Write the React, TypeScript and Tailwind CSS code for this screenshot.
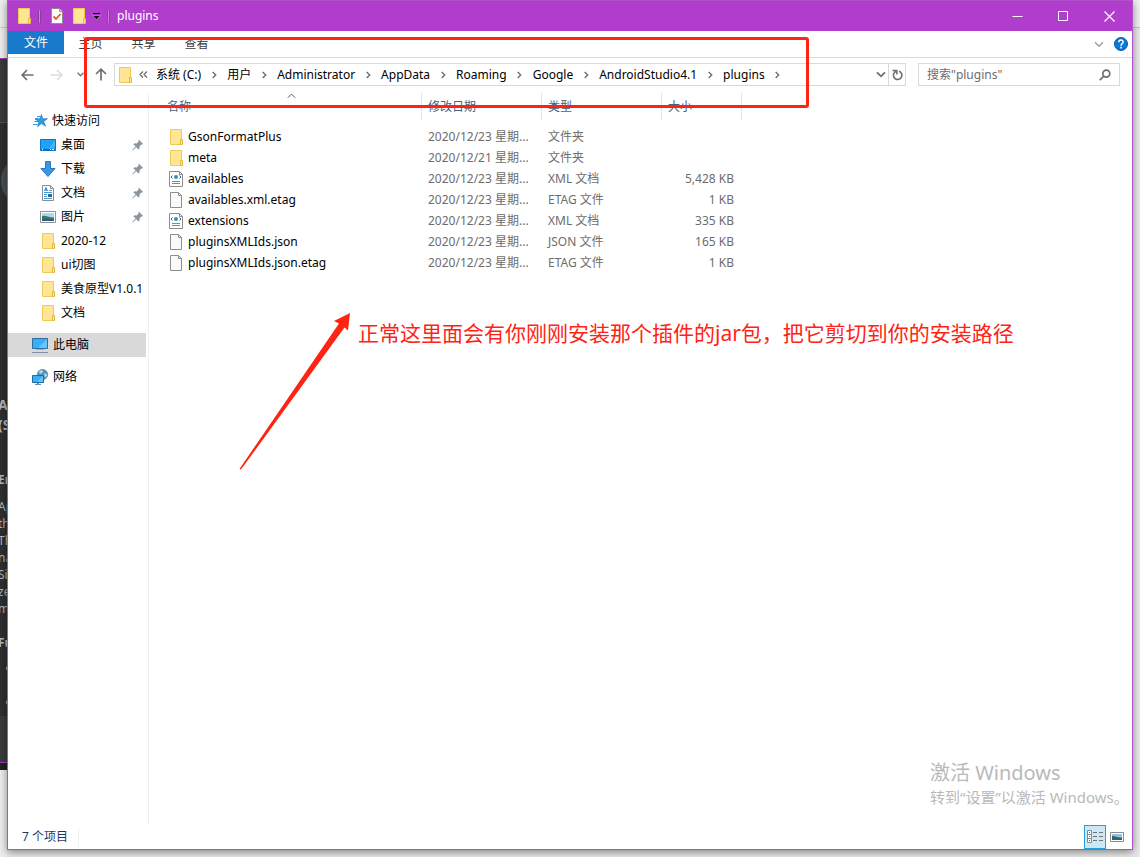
import type { ReactNode } from "react";

type IconName =
  | "star"
  | "desktop"
  | "download"
  | "document"
  | "picture"
  | "folder"
  | "computer"
  | "network"
  | "xml"
  | "blank";

const quickAccess: { label: string; icon: IconName; pinned?: boolean }[] = [
  { label: "桌面", icon: "desktop", pinned: true },
  { label: "下载", icon: "download", pinned: true },
  { label: "文档", icon: "document", pinned: true },
  { label: "图片", icon: "picture", pinned: true },
  { label: "2020-12", icon: "folder" },
  { label: "ui切图", icon: "folder" },
  { label: "美食原型V1.0.1", icon: "folder" },
  { label: "文档", icon: "folder" },
];

const files: { name: string; icon: IconName; date: string; type: string; size?: string }[] = [
  { name: "GsonFormatPlus", icon: "folder", date: "2020/12/23 星期...", type: "文件夹" },
  { name: "meta", icon: "folder", date: "2020/12/21 星期...", type: "文件夹" },
  { name: "availables", icon: "xml", date: "2020/12/23 星期...", type: "XML 文档", size: "5,428 KB" },
  { name: "availables.xml.etag", icon: "blank", date: "2020/12/23 星期...", type: "ETAG 文件", size: "1 KB" },
  { name: "extensions", icon: "xml", date: "2020/12/23 星期...", type: "XML 文档", size: "335 KB" },
  { name: "pluginsXMLIds.json", icon: "blank", date: "2020/12/23 星期...", type: "JSON 文件", size: "165 KB" },
  { name: "pluginsXMLIds.json.etag", icon: "blank", date: "2020/12/23 星期...", type: "ETAG 文件", size: "1 KB" },
];

const crumbs = ["系统 (C:)", "用户", "Administrator", "AppData", "Roaming", "Google", "AndroidStudio4.1", "plugins"];

export default function App() {
  return (
    <div className="relative flex min-h-screen overflow-hidden bg-[#e9e9e9] font-['Noto_Sans','Noto_Sans_CJK_SC',sans-serif] text-[12px] leading-[16px] text-black">
      <BackgroundWindow />
      <div className="relative mb-[7px] flex min-w-0 flex-1 flex-col border border-[#b150cb] bg-white shadow-[0_2px_8px_rgba(0,0,0,0.45)]">
        <TitleBar />
        <Ribbon />
        <AddressRow />
        <div className="flex flex-1 pt-[3px]">
          <Sidebar />
          <FileTable />
        </div>
        <StatusBar />
        <div className="pointer-events-none absolute right-[2px] bottom-[41px] w-[200px] whitespace-nowrap text-[#b9b9b9]">
          <p className="text-[20px] leading-[26px]">激活 Windows</p>
          <p className="text-[15px] leading-[22px]">转到“设置”以激活 Windows。</p>
        </div>
      </div>
      <div className="w-[7px] shrink-0">
        <div className="h-[28px] border-b border-[#c4c4c4] bg-[#f1f1f1]" />
      </div>
      <Annotations />
    </div>
  );
}

function BackgroundWindow() {
  return (
    <div className="flex w-[7px] shrink-0 flex-col overflow-hidden whitespace-nowrap bg-[#eeeeee] text-[#b3b6b8]" aria-hidden="true">
      <div className="h-[28px] shrink-0 border-b border-[#cccccc]" />
      <div className="h-[30px] shrink-0" />
      <div className="h-[65px] shrink-0 border-t border-b border-t-[#a13ebb] border-b-[#515355] bg-[#393b3d]" />
      <div className="h-[593px] shrink-0 bg-[#2d2f31]">
        <div className="flex h-[272px] pt-[32px]">
          <div className="ml-px size-[52px] shrink-0 rounded-full bg-[#4b5053]" />
        </div>
        <div className="-ml-[2px] text-[14px] leading-[20px] font-bold">
          <p>A</p>
          <p>(S</p>
        </div>
        <p className="mt-[36px] -ml-[2px] leading-[18px] font-bold">Em</p>
        <div className="mt-[9px] -ml-[2px] leading-[17px]">
          <p>Ap</p>
          <p>th</p>
          <p>Th</p>
          <p>na</p>
          <p>Si</p>
          <p>ze</p>
          <p>m</p>
        </div>
        <p className="mt-[17px] -ml-[2px] leading-[17px] font-bold">Fu</p>
        <div className="mt-[15px] ml-[6px] size-[5px] rounded-full bg-[#b3b6b8]" />
        <div className="mt-[29px] ml-[6px] size-[5px] rounded-full bg-[#b3b6b8]" />
      </div>
      <div className="h-[47px] shrink-0 border-b border-[#a13ebb] bg-[#393b3d]" />
      <div className="h-[7px] shrink-0 bg-[#222222]" />
    </div>
  );
}

function TitleBar() {
  return (
    <header className="flex h-[30px] items-center bg-[#b03dcc] pl-[8px] text-white">
      <Icon name="folder" />
      <Divider className="ml-[6px]" />
      <button type="button" aria-label="属性" className="ml-[8px]">
        <svg width="16" height="16" viewBox="0 0 16 16">
          <path d="M2.5.5h8l3 3v12h-11z" fill="#fff" stroke="#8d8d8d" />
          <path d="M10.500.500v3h3" fill="#ddd" stroke="#8d8d8d" />
          <path d="m4.500 8.500 2.500 2.500 4.500-5" fill="none" stroke="#e2572b" strokeWidth="1.800" />
        </svg>
      </button>
      <button type="button" aria-label="新建文件夹" className="ml-[6px]">
        <Icon name="folder" />
      </button>
      <button type="button" aria-label="自定义快速访问工具栏" className="ml-[5px]">
        <svg width="9" height="8" viewBox="0 0 9 8">
          <path d="M1 1.500h7" stroke="#000" />
          <path d="M.500 3.500h8l-4 4z" fill="#000" stroke="#dca6ea" strokeWidth=".6" />
        </svg>
      </button>
      <Divider className="ml-[6px]" />
      <h1 className="ml-[7px]">plugins</h1>
      <div className="ml-auto flex self-stretch">
        <CaptionButton label="最小化">
          <path d="M.500 5.500h10" />
        </CaptionButton>
        <CaptionButton label="最大化">
          <path d="M.500.500h9v9h-9z" />
        </CaptionButton>
        <CaptionButton label="关闭">
          <path d="m.500.500 10 10M10.500.500l-10 10" strokeWidth="1.200" />
        </CaptionButton>
      </div>
    </header>
  );
}

function CaptionButton({ label, children }: { label: string; children: ReactNode }) {
  return (
    <button type="button" aria-label={label} className="grid w-[46px] place-items-center hover:bg-white/20">
      <svg width="11" height="11" viewBox="0 0 11 11" fill="none" stroke="#fff">
        {children}
      </svg>
    </button>
  );
}

function Divider({ className }: { className: string }) {
  return <span className={`h-[13px] w-[3px] border-x border-x-[#8e3aa3] bg-[#cf7fe2] ${className}`} />;
}

function Ribbon() {
  return (
    <nav className="flex h-[27px] border-b border-[#dadbdc] text-[#3c3c3c]">
      <button type="button" className="h-[23px] w-[56px] bg-[#1979ca] pt-px text-white">
        文件
      </button>
      <button type="button" className="h-[23px] w-[53px] pt-[2px]">
        主页
      </button>
      <button type="button" className="h-[23px] w-[53px] pt-[2px]">
        共享
      </button>
      <button type="button" className="h-[23px] w-[53px] pt-[2px]">
        查看
      </button>
      <div className="ml-auto flex items-center gap-[10px] pr-[4px]">
        <button type="button" aria-label="展开功能区">
          <Chevron direction="down" className="text-[#9a9a9a]" />
        </button>
        <button type="button" aria-label="帮助">
          <svg width="14" height="14" viewBox="0 0 14 14">
            <circle cx="7" cy="7" r="6.500" fill="#0a78d6" stroke="#0b5ca6" />
            <path d="M4.800 5.300c0-3 4.400-2.900 4.400-.3C9.200 6.700 7 6.500 7 8.700M7 9.800v1.600" fill="none" stroke="#fff" strokeWidth="1.500" />
          </svg>
        </button>
      </div>
    </nav>
  );
}

function AddressRow() {
  return (
    <div className="flex items-center pt-[5px] pr-[12px] pb-[4px] pl-[7px]">
      <button type="button" aria-label="后退" className="grid h-[23px] w-[24px] place-items-center">
        <svg width="13" height="12" viewBox="0 0 13 12" fill="none" stroke="#6e6e6e" strokeWidth="1.700">
          <path d="M12.500 6H1.500M6 1 1.200 6 6 11" />
        </svg>
      </button>
      <button type="button" aria-label="前进" className="ml-[5px] grid h-[23px] w-[24px] place-items-center">
        <svg width="13" height="12" viewBox="0 0 13 12" fill="none" stroke="#dcdcdc" strokeWidth="1.700">
          <path d="M.500 6h11M7 1l4.800 5L7 11" />
        </svg>
      </button>
      <button type="button" aria-label="最近浏览的位置" className="ml-[6px] grid w-[12px] place-items-center">
        <svg width="7" height="5" viewBox="0 0 7 5" fill="none" stroke="#7a7a7a" strokeWidth="1.400">
          <path d="m.500.800 3 3 3-3" />
        </svg>
      </button>
      <button type="button" aria-label="上移" className="ml-[5px] grid h-[23px] w-[20px] place-items-center">
        <svg width="12" height="13" viewBox="0 0 12 13" fill="none" stroke="#6e6e6e" strokeWidth="1.700">
          <path d="M6 12.500V1.500M1 6l5-4.800L11 6" />
        </svg>
      </button>
      <div className="ml-[3px] flex h-[23px] min-w-0 flex-1 items-center border border-[#d9d9d9] pl-[2px]">
        <Icon name="folder" />
        <svg className="mr-[8px] ml-[6px]" width="9" height="7" viewBox="0 0 9 7" fill="none" stroke="#6e6e6e" strokeWidth="1.300">
          <path d="m4 .500-3 3 3 3M8 .500l-3 3 3 3" />
        </svg>
        {crumbs.map((crumb) => (
          <span key={crumb} className="flex items-center whitespace-nowrap">
            <button type="button">{crumb}</button>
            <span className="grid w-[26px] place-items-center">
              <Chevron direction="right" className="text-[#6e6e6e]" />
            </span>
          </span>
        ))}
        <button type="button" aria-label="以前的位置" className="ml-auto pr-[2px]">
          <Chevron direction="down" className="text-[#707070]" bold />
        </button>
        <button type="button" aria-label="刷新" className="grid w-[17px] place-items-center self-stretch border-l border-[#d9d9d9]">
          <svg width="11" height="12" viewBox="0 0 11 12" fill="none" stroke="#6e6e6e" strokeWidth="1.600">
            <path d="M7 2.300A4.200 4.200 0 1 1 2.500 3.500L4.300 1.800M.500 1.500h4.300v4" />
          </svg>
        </button>
      </div>
      <label className="ml-[12px] flex h-[23px] w-[202px] items-center border border-[#d9d9d9] pr-[8px] pl-[8px]">
        <input
          type="search"
          aria-label="搜索"
          placeholder={'搜索"plugins"'}
          className="min-w-0 flex-1 outline-none placeholder:text-[#6d6d6d] placeholder:opacity-100"
        />
        <svg width="12" height="12" viewBox="0 0 12 12" fill="none" stroke="#6e6e6e" strokeWidth="1.700">
          <circle cx="7.300" cy="4.600" r="3.500" />
          <path d="M4.800 7.200.800 11.200" />
        </svg>
      </label>
    </div>
  );
}

function Sidebar() {
  return (
    <aside className="flex w-[141px] shrink-0 flex-col border-r border-[#f0f0f0] pt-[16px] pr-[2px]">
      <a href="#quick" className="flex h-[24px] items-center gap-[4px] pl-[24px]">
        <Icon name="star" />
        快速访问
      </a>
      {quickAccess.map((item, i) => (
        <a key={i} href={`#quick-${i}`} className="flex h-[24px] items-center gap-[5px] whitespace-nowrap pl-[32px]">
          <Icon name={item.icon} />
          {item.label}
          {item.pinned ? <PinIcon /> : null}
        </a>
      ))}
      <a href="#computer" className="mt-[8px] flex h-[24px] items-center gap-[5px] bg-[#d9d9d9] pl-[24px]">
        <Icon name="computer" />
        此电脑
      </a>
      <a href="#network" className="mt-[8px] flex h-[24px] items-center gap-[5px] pl-[24px]">
        <Icon name="network" />
        网络
      </a>
    </aside>
  );
}

function FileTable() {
  return (
    <main className="min-w-0 flex-1">
      <table className="w-[593px] table-fixed text-left text-[#6d6d6d]">
        <thead className="text-[#4c607a]">
          <tr>
            <HeaderCell className="w-[273px]" inset="pl-[18px]" sorted>
              名称
            </HeaderCell>
            <HeaderCell className="w-[120px]">修改日期</HeaderCell>
            <HeaderCell className="w-[120px]">类型</HeaderCell>
            <HeaderCell className="w-[80px]">大小</HeaderCell>
          </tr>
        </thead>
        <tbody>
          {files.map((file) => (
            <tr key={file.name} className="h-[21px] whitespace-nowrap">
              <td className="p-0 text-black">
                <span className="flex items-center gap-[4px] pl-[19px]">
                  <Icon name={file.icon} />
                  {file.name}
                </span>
              </td>
              <td className="p-0 pl-[6px]">{file.date}</td>
              <td className="p-0 pl-[6px]">{file.type}</td>
              <td className="p-0 pr-[8px] text-right">{file.size}</td>
            </tr>
          ))}
        </tbody>
      </table>
    </main>
  );
}

function HeaderCell({
  children,
  className,
  inset = "pl-[6px]",
  sorted,
}: {
  children: ReactNode;
  className: string;
  inset?: string;
  sorted?: boolean;
}) {
  return (
    <th scope="col" className={`p-0 pb-[6px] font-normal ${className}`}>
      <div className={`relative flex h-[27px] items-center border-r border-[#e5e5e5] ${inset}`}>
        {children}
        {sorted ? (
          <svg className="absolute top-0 left-[138px]" width="9" height="6" viewBox="0 0 9 6" fill="none" stroke="#5a5a5a">
            <path d="m.800 4.800 3.700-3.700 3.700 3.700" />
          </svg>
        ) : null}
      </div>
    </th>
  );
}

function StatusBar() {
  return (
    <footer className="flex h-[24px] items-center pl-[14px] text-[#1e395b]">
      <span className="pr-[10px]">7 个项目</span>
      <span className="h-[19px] w-px bg-[#f0f0f0]" />
      <div className="ml-auto flex items-center pr-[7px]">
        <button
          type="button"
          aria-label="详细信息"
          className="grid h-[24px] w-[22px] place-items-center border border-[#26a0da] bg-[#cce8f6]"
        >
          <svg width="17" height="14" viewBox="0 0 17 14" fill="none">
            <path d="M.5.5h4v12h-4zM.5 4.500h4M.5 8.500h4" fill="#fff" stroke="#8a8a8a" />
            <path d="M2 2.500h1M2 6.500h1" stroke="#3a78a8" />
            <path d="M2 10.500h1" stroke="#d03030" />
            <path d="M6 2.500h4M12 2.500h4M6 6.500h4M12 6.500h4M6 10.500h4M12 10.500h4" stroke="#6e7478" />
          </svg>
        </button>
        <button type="button" aria-label="大缩略图" className="ml-[3px]">
          <svg width="16" height="16" viewBox="0 0 16 16" fill="none">
            <path d="M1.500 3.500h13v9h-13z" fill="#fff" stroke="#8a8a8a" />
            <path d="M3 5h10v6H3z" fill="#8fc0ee" />
            <path d="M3 7c3 0 5 1.500 10 1.500V11H3z" fill="#35635f" />
          </svg>
        </button>
      </div>
    </footer>
  );
}

function Annotations() {
  return (
    <div className="pointer-events-none absolute inset-0 text-[#ff2314]">
      <div className="absolute top-[37px] left-[84px] h-[71px] w-[725px] rounded-[3px] border-[3px] border-[#ff2314]" />
      <svg className="absolute top-[312px] left-[239px]" width="112" height="158" viewBox="0 0 112 158" fill="currentColor">
        <path d="M.500 157 100 11.500 95 9 111 1 109 18.500 105.500 15.500 2 157.500z" />
      </svg>
      <p className="absolute top-[318px] left-[358px] whitespace-nowrap text-[21px] leading-[30px]">
        正常这里面会有你刚刚安装那个插件的jar包，把它剪切到你的安装路径
      </p>
    </div>
  );
}

function Chevron({ direction, className, bold }: { direction: "right" | "down"; className: string; bold?: boolean }) {
  if (direction === "right") {
    return (
      <svg className={className} width="5" height="8" viewBox="0 0 5 8" fill="none" stroke="currentColor" strokeWidth="1.400">
        <path d="m.700.900 3 3.100-3 3.100" />
      </svg>
    );
  }
  return (
    <svg className={className} width="10" height="7" viewBox="0 0 10 7" fill="none" stroke="currentColor" strokeWidth={bold ? 1.8 : 1.3}>
      <path d="m1 1.300 4 4 4-4" />
    </svg>
  );
}

function PinIcon() {
  return (
    <svg className="mr-[2px] ml-auto" width="12" height="12" viewBox="0 0 12 12" fill="#8a979f">
      <path d="M7 .8 11.200 5l-1 .6-.7-.2-2 2 .1 2.200-1 .9-2.300-2.300L.8 11.500l-.5-.5 3.300-3.500L1.400 5.300l1-1 2.200.1 2-2L6.400 1.500z" />
    </svg>
  );
}

function Icon({ name }: { name: IconName }) {
  return (
    <svg width="16" height="16" viewBox="0 0 16 16" className="shrink-0" fill="none">
      {icons[name]}
    </svg>
  );
}

const icons: Record<IconName, ReactNode> = {
  folder: (
    <>
      <path d="M2.500.5h11v15h-11z" fill="#ffe594" stroke="#efcb55" />
      <path d="M12.500 10.500h2v5h-2z" fill="#ffe594" stroke="#e3b93c" />
    </>
  ),
  star: (
    <>
      <path d="m9.500 1.500 1.200 4.300 4.800-.1-3.800 2.700 1.800 4.900-4.100-2.800-3.900 3.200 1.300-5L3 6l4.700-.3z" fill="#2b9be6" stroke="#1678bd" strokeWidth=".6" />
      <path d="M5 3.500h3M2.500 8.500h4M1 11.500h4.500M3 5.500h3" stroke="#2b9be6" />
    </>
  ),
  desktop: (
    <>
      <path d="M.5 2.500h15v11H.5z" fill="#1fa2f8" stroke="#1573b9" />
      <path d="M15 3v7L8 13z" fill="#45b4fb" />
      <path d="M1 12.500h14" stroke="#0c64ad" />
      <path d="M2 12.500h1M10 12.500h1M12 12.500h2" stroke="#fff" />
    </>
  ),
  download: <path d="M5.500.5h5v7h4.500L8 15.500.900 7.500h4.600z" fill="#3d96e2" stroke="#2478c4" />,
  document: (
    <>
      <path d="M2.500.5h8l3 3v12h-11z" fill="#fff" stroke="#8d8d8d" />
      <path d="M10.500.500v3h3" stroke="#8d8d8d" />
      <path d="m4.500 6 1.500-3.500L7.500 6M5 5h2" stroke="#1f7fcb" />
      <path d="M9 5.500h3M4 7.500h8M4 9.500h3M4 11.500h3M4 13.500h8" stroke="#4a9ad5" />
      <path d="M8 9h4v3H8z" fill="#33688d" />
    </>
  ),
  picture: (
    <>
      <path d="M.5 2.500h15v11H.5z" fill="#fff" stroke="#919191" />
      <path d="M2 4h12v8H2z" fill="#a9d7f5" />
      <path d="M2 7c3-1 6 1.500 12 1.500V12H2z" fill="#3e7562" />
      <path d="M2 10.500c4-1.500 8 0 12-.5v2H2z" fill="#2c5c8e" />
    </>
  ),
  computer: (
    <>
      <path d="M.5 1.500h15v10H.5z" fill="#38aefa" stroke="#2d6f9f" />
      <path d="M15 2v9H6z" fill="#66c5fd" />
      <path d="M4 12.500h8" stroke="#8fb5cf" />
      <path d="M0 15.500h16" stroke="#7f93ad" />
    </>
  ),
  network: (
    <>
      <circle cx="10.500" cy="5.500" r="5.200" fill="#5795b8" stroke="#4b7f9e" strokeWidth=".6" />
      <path d="M7 2.500c2-2 4-1.500 4 0S9 4 8 5zM12 5c2-1 3 0 3 1.500l-2 2z" fill="#b2dae6" />
      <path d="M.5 6.500h11v7H.5z" fill="#38aefa" stroke="#1f6b9e" />
      <path d="M11 7v6H5z" fill="#66c5fd" />
      <path d="M3 15.500h6M5 14.500h2" stroke="#6d8fa8" />
    </>
  ),
  xml: (
    <>
      <path d="M1.500.5h10l3 3v12h-13z" fill="#fff" stroke="#8d8d8d" />
      <path d="M11.500.500v3h3" stroke="#8d8d8d" />
      <circle cx="8" cy="6" r="2" fill="#2a94b8" />
      <path d="M4.500 4.500 3 6l1.500 1.500M11.500 4.500 13 6l-1.500 1.500" stroke="#47568c" />
      <path d="M4 10.500h8M4 12.500h8" stroke="#7f86a8" />
    </>
  ),
  blank: (
    <>
      <path d="M2.500.5h8l3 3v12h-11z" fill="#fafafa" stroke="#8d8d8d" />
      <path d="M10.500.500v3h3" stroke="#8d8d8d" />
    </>
  ),
};
